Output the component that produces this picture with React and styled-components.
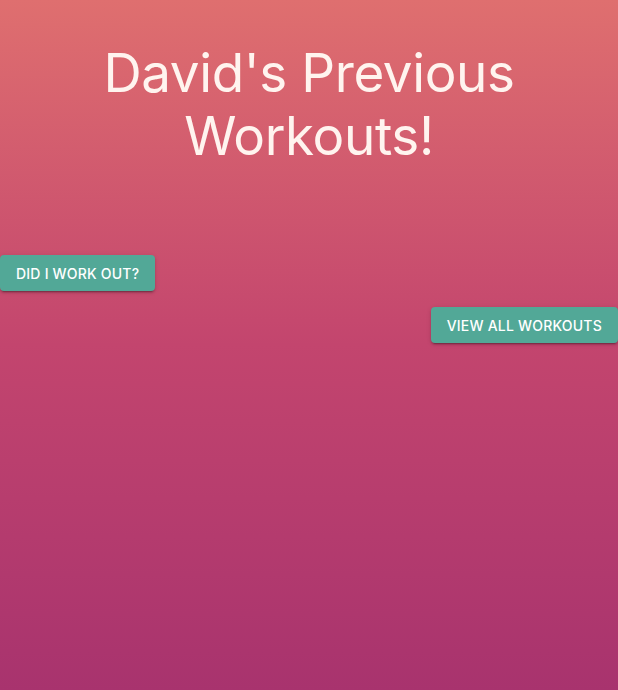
import React from "react";
import styled, { createGlobalStyle } from "styled-components";

const Global = createGlobalStyle`
  html, body { margin: 0; padding: 0; }
  body { font-family: Inter, "Noto Sans", sans-serif; }
`;

const Page = styled.div`
  min-height: 690px;
  background: linear-gradient(180deg, #df6f6f 0%, #c3456e 50%, #a8336e 100%);
  display: flex;
  flex-direction: column;
  padding-top: 42px;
  box-sizing: border-box;
`;

const Title = styled.h1`
  margin: 0 0 87px;
  text-align: center;
  color: #fff4ef;
  font-family: Inter, "Noto Sans", sans-serif;
  font-weight: 400;
  font-size: 53px;
  line-height: 63px;
  letter-spacing: -0.4px;
  padding: 0 90px;
`;

const Actions = styled.div`
  display: flex;
  flex-direction: column;
  gap: 16px;
`;

const Button = styled.button`
  align-self: ${(p) => (p.$end ? "flex-end" : "flex-start")};
  height: 36px;
  padding: 0 16px;
  border: none;
  border-radius: 4px;
  background: #52a897;
  color: #fff;
  font-family: Inter, "Noto Sans", sans-serif;
  font-weight: 500;
  font-size: 14px;
  letter-spacing: 0.22px;
  text-transform: uppercase;
  box-shadow: 0 3px 1px -2px rgba(0,0,0,0.2), 0 2px 2px 0 rgba(0,0,0,0.14), 0 1px 5px 0 rgba(0,0,0,0.12);
  cursor: pointer;
`;

export default function App() {
  return (
    <>
      <Global />
      <Page>
        <Title>David's Previous Workouts!</Title>
        <Actions>
          <Button>Did I work out?</Button>
          <Button $end>View all workouts</Button>
        </Actions>
      </Page>
    </>
  );
}
